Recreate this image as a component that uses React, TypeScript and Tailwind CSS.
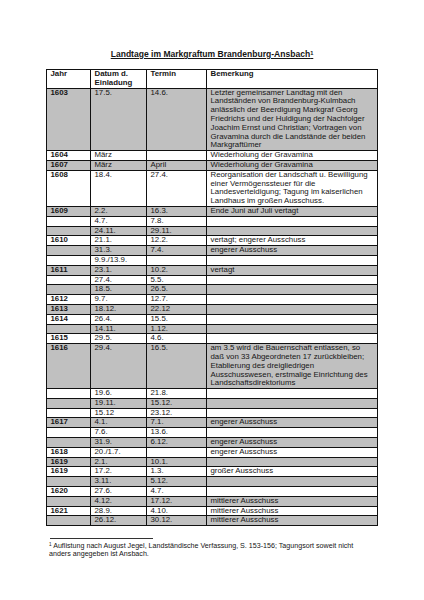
import React from "react";

type Row = { y?: string; d: string; t: string; b?: string[] };

const rows: Row[] = [
  {
    y: "1603",
    d: "17.5.",
    t: "14.6.",
    b: [
      "Letzter gemeinsamer Landtag mit den",
      "Landständen von Brandenburg-Kulmbach",
      "anlässlich der Beerdigung Markgraf Georg",
      "Friedrichs und der Huldigung der Nachfolger",
      "Joachim Ernst und Christian; Vortragen von",
      "Gravamina durch die Landstände der beiden",
      "Markgraftümer",
    ],
  },
  { y: "1604", d: "März", t: "", b: ["Wiederholung der Gravamina"] },
  { y: "1607", d: "März", t: "April", b: ["Wiederholung der Gravamina"] },
  {
    y: "1608",
    d: "18.4.",
    t: "27.4.",
    b: [
      "Reorganisation der Landschaft u. Bewilligung",
      "einer Vermögenssteuer für die",
      "Landesverteidigung; Tagung im kaiserlichen",
      "Landhaus im großen Ausschuss.",
    ],
  },
  { y: "1609", d: "2.2.", t: "16.3.", b: ["Ende Juni auf Juli vertagt"] },
  { d: "4.7.", t: "7.8." },
  { d: "24.11.", t: "29.11." },
  { y: "1610", d: "21.1.", t: "12.2.", b: ["vertagt; engerer Ausschuss"] },
  { d: "31.3.", t: "7.4.", b: ["engerer Ausschuss"] },
  { d: "9.9./13.9.", t: "" },
  { y: "1611", d: "23.1.", t: "10.2.", b: ["vertagt"] },
  { d: "27.4.", t: "5.5." },
  { d: "18.5.", t: "26.5." },
  { y: "1612", d: "9.7.", t: "12.7." },
  { y: "1613", d: "18.12.", t: "22.12" },
  { y: "1614", d: "26.4.", t: "15.5." },
  { d: "14.11.", t: "1.12." },
  { y: "1615", d: "29.5.", t: "4.6." },
  {
    y: "1616",
    d: "29.4.",
    t: "16.5.",
    b: [
      "am 3.5 wird die Bauernschaft entlassen, so",
      "daß von 33 Abgeordneten 17 zurückbleiben;",
      "Etablierung des dreigliedrigen",
      "Ausschusswesen, erstmalige Einrichtung des",
      "Landschaftsdirektoriums",
    ],
  },
  { d: "19.6.", t: "21.8." },
  { d: "19.11.", t: "15.12." },
  { d: "15.12", t: "23.12." },
  { y: "1617", d: "4.1.", t: "7.1.", b: ["engerer Ausschuss"] },
  { d: "7.6.", t: "13.6." },
  { d: "31.9.", t: "6.12.", b: ["engerer Ausschuss"] },
  { y: "1618", d: "20./1.7.", t: "", b: ["engerer Ausschuss"] },
  { y: "1619", d: "2.1.", t: "10.1." },
  { y: "1619", d: "17.2.", t: "1.3.", b: ["großer Ausschuss"] },
  { d: "3.11.", t: "5.12." },
  { y: "1620", d: "27.6.", t: "4.7." },
  { d: "4.12.", t: "17.12.", b: ["mittlerer Ausschuss"] },
  { y: "1621", d: "28.9.", t: "4.10.", b: ["mittlerer Ausschuss"] },
  { d: "26.12.", t: "30.12.", b: ["mittlerer Ausschuss"] },
];

const cell =
  "border border-[#111] align-top px-[3.5px] py-0 text-left whitespace-nowrap";

export default function App() {
  return (
    <div className="w-[424px] h-[600px] bg-white text-[#151515] font-['Liberation_Sans',Arial,sans-serif] overflow-hidden">
      <div className="pt-[49px] h-[59px] text-center text-[8.55px] leading-[10px] font-bold">
        <span className="underline underline-offset-[1px]">
          Landtage im Markgraftum Brandenburg-Ansbach
          <sup className="text-[5.6px] align-baseline leading-none relative -top-[2.5px]">1</sup>
        </span>
      </div>
      <table className="ml-[46px] mt-[10px] w-[332px] table-fixed border-collapse text-[7.84px] leading-[8.8px]">
        <colgroup>
          <col className="w-[44px]" />
          <col className="w-[56px]" />
          <col className="w-[60px]" />
          <col />
        </colgroup>
        <thead>
          <tr className="bg-white font-bold">
            <th className={cell}>Jahr</th>
            <th className={cell}>
              Datum d.
              <br />
              Einladung
            </th>
            <th className={cell}>Termin</th>
            <th className={cell}>Bemerkung</th>
          </tr>
        </thead>
        <tbody>
          {rows.map((r, i) => (
            <tr key={i} className={i % 2 === 0 ? "bg-[#c0c0c0]" : "bg-white"}>
              <td className={cell + " font-bold"}>{r.y ?? ""}</td>
              <td className={cell}>{r.d}</td>
              <td className={cell}>{r.t}</td>
              <td className={cell}>
                {r.b
                  ? r.b.map((l, j) => (
                      <React.Fragment key={j}>
                        {j > 0 && <br />}
                        {l}
                      </React.Fragment>
                    ))
                  : null}
              </td>
            </tr>
          ))}
        </tbody>
      </table>
      <div className="ml-[50px] mt-[12px] w-[103px] h-px bg-[#333]" />
      <div className="ml-[49px] mt-[3px] text-[7.13px] leading-[8.2px] whitespace-nowrap">
        <sup className="text-[4.6px] align-baseline leading-none relative -top-[2px]">1</sup>
        {" "}Auflistung nach August Jegel, Landständische Verfassung, S. 153-156; Tagungsort soweit nicht
        <br />
        anders angegeben ist Ansbach.
      </div>
    </div>
  );
}
